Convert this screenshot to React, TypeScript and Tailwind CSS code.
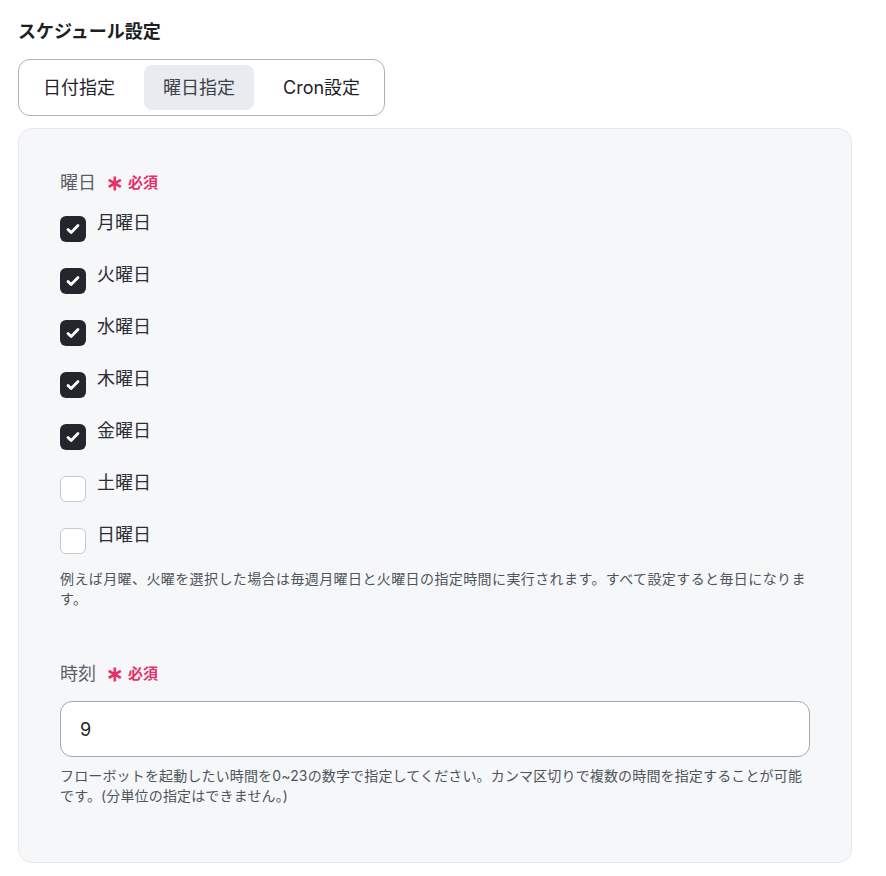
import React, { useState } from 'react';

const days = ['月曜日', '火曜日', '水曜日', '木曜日', '金曜日', '土曜日', '日曜日'];
const tabs = ['日付指定', '曜日指定', 'Cron設定'];

const Required = () => (
  <span className="ml-[10px] inline-flex items-center text-[15px] font-semibold text-[#e5306a]">
    <span className="mr-[4px] text-[21px] font-bold leading-none">∗</span>必須
  </span>
);

const CheckIcon = () => (
  <svg width="16" height="16" viewBox="0 0 16 16" fill="none">
    <path d="M3 8.4l3.1 3.1L13 4.6" stroke="white" strokeWidth="2.8" strokeLinecap="round" strokeLinejoin="round" />
  </svg>
);

export default function App() {
  const [tab, setTab] = useState(1);
  const [checked, setChecked] = useState<boolean[]>([true, true, true, true, true, false, false]);
  const [hour, setHour] = useState('9');

  const toggle = (i: number) => {
    const next = [...checked];
    next[i] = !next[i];
    setChecked(next);
  };

  return (
    <div className="min-h-screen bg-white px-[18px] pt-[18px] pb-4 font-['Inter','Noto_Sans_CJK_JP',sans-serif] text-[#25282d]">
      {/* Title */}
      <h1 className="text-[18px] font-bold leading-[27px] text-[#1d1f23]">スケジュール設定</h1>

      {/* Tabs */}
      <div className="mt-[14px] inline-flex gap-[10px] rounded-[12px] border border-[#aeb2b8] bg-white p-[5px]">
        {tabs.map((t, i) => (
          <button
            key={t}
            onClick={() => setTab(i)}
            className={`rounded-[8px] px-[19px] py-[9px] text-[18px] leading-[27px] ${
              tab === i ? 'bg-[#e8ebef] text-[#3d4148]' : 'text-[#1f2226]'
            }`}
          >
            {t}
          </button>
        ))}
      </div>

      {/* Panel */}
      <div className="mt-[12px] w-[834px] rounded-[14px] border border-[#e6e8ec] bg-[#f6f7f9] px-[41px] pt-[40px] pb-[56px]">
        <div className="flex items-center text-[18px] leading-[27px] text-[#5a5f67]">
          曜日
          <Required />
        </div>

        <div className="mt-[13px] flex flex-col gap-[19px]">
          {days.map((d, i) => (
            <label key={d} className="flex cursor-pointer items-start gap-[11px]">
              <span
                onClick={() => toggle(i)}
                className={`mt-[7px] flex h-[26px] w-[26px] items-center justify-center rounded-[6px] ${
                  checked[i] ? 'bg-[#23262d]' : 'border border-[#c6c9ce] bg-white'
                }`}
              >
                {checked[i] && <CheckIcon />}
              </span>
              <span className="mt-[1px] text-[18px] leading-[26px] text-[#2b2e33]">{d}</span>
            </label>
          ))}
        </div>

        <p className="mt-[15px] text-[14px] leading-[20px] tracking-[0.4px] text-[#4f545b]">
          例えば月曜、火曜を選択した場合は毎週月曜日と火曜日の指定時間に実行されます。すべて設定すると毎日になります。
        </p>

        <div className="mt-[51px] flex items-center text-[18px] leading-[27px] text-[#5a5f67]">
          時刻
          <Required />
        </div>

        <input
          value={hour}
          onChange={(e) => setHour(e.target.value)}
          className="mt-[14px] h-[56px] w-full rounded-[12px] border border-[#a3a7ae] bg-white px-[19px] text-[18px] text-[#202328] outline-none"
        />

        <p className="mt-[9px] text-[14px] leading-[20px] tracking-[0.15px] text-[#4f545b]">
          フローボットを起動したい時間を0~23の数字で指定してください。カンマ区切りで複数の時間を指定することが可能です。(分単位の指定はできません。)
        </p>
      </div>
    </div>
  );
}
